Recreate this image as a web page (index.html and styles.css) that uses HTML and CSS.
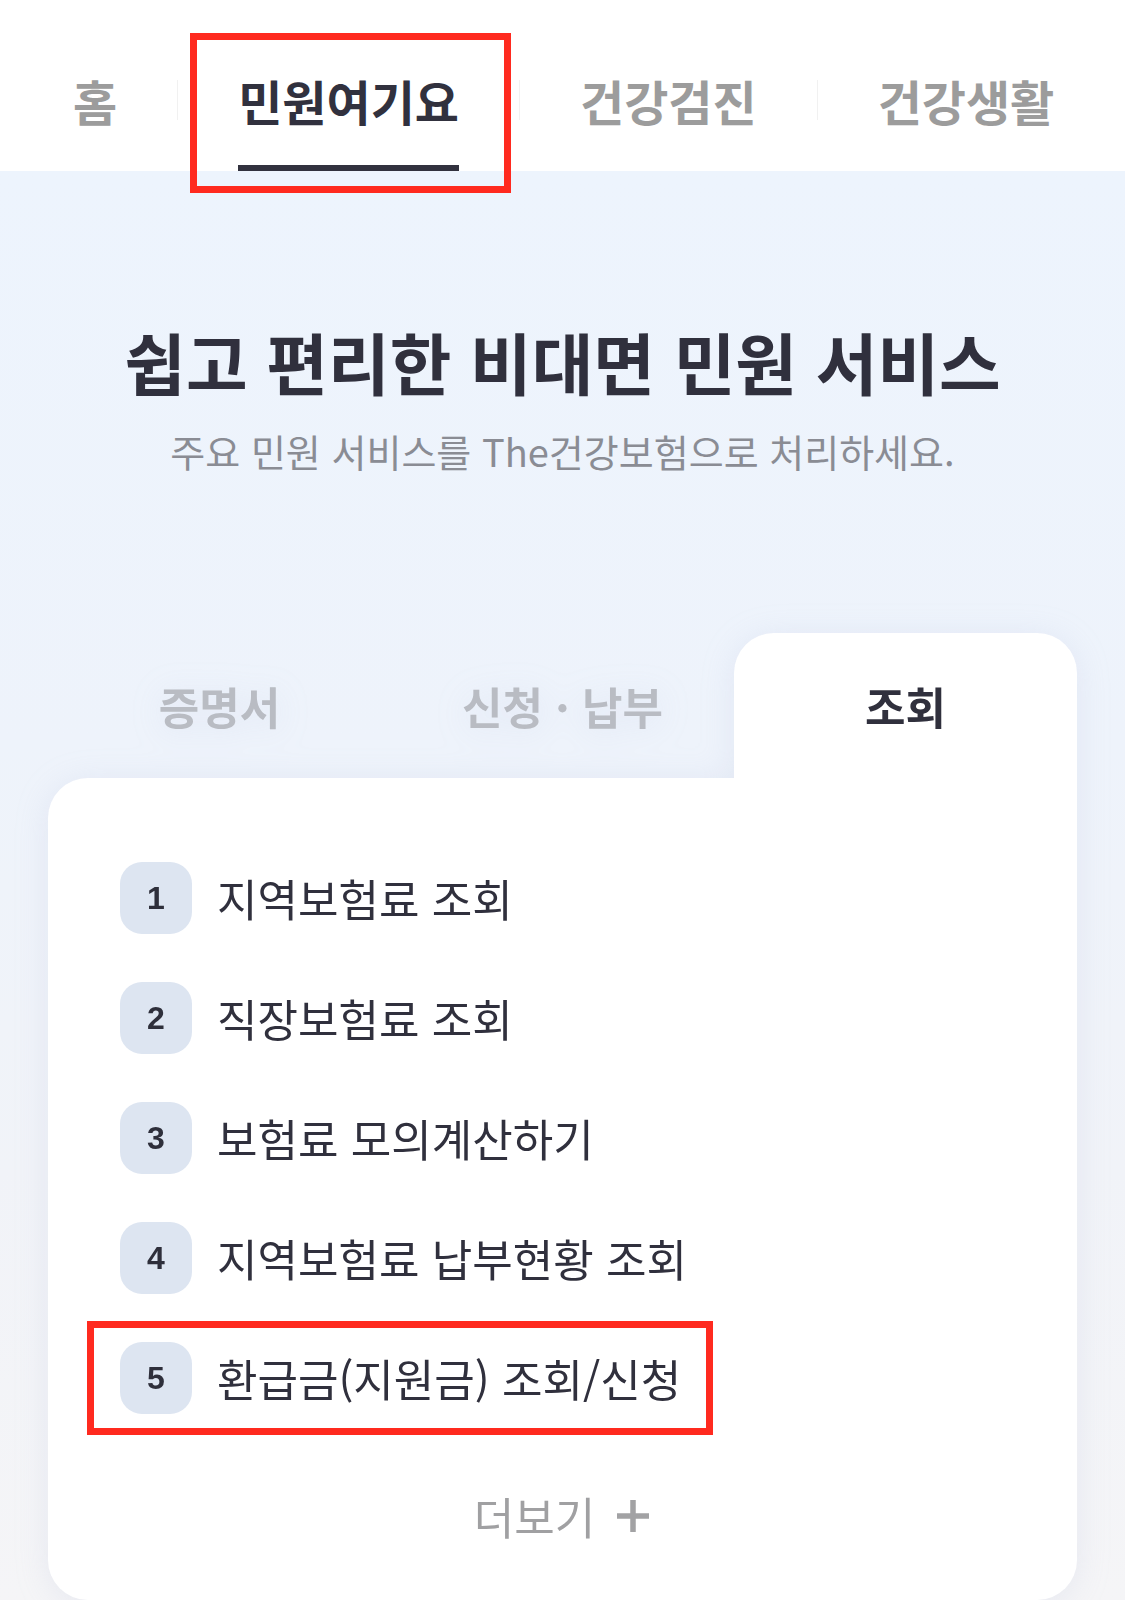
FILE: index.html
```html
<!DOCTYPE html>
<html lang="ko">
<head>
<meta charset="utf-8">
<link rel="stylesheet" href="styles.css">
</head>
<body>
<div class="page">
  <nav class="gnb">
    <a class="gnb-item">홈</a>
    <span class="gnb-sep"></span>
    <a class="gnb-item active">민원여기요<span class="mark mark-tab"></span></a>
    <span class="gnb-sep"></span>
    <a class="gnb-item">건강검진</a>
    <span class="gnb-sep"></span>
    <a class="gnb-item">건강생활</a>
  </nav>
  <main class="content">
    <section class="hero">
      <h1 class="hero-title">쉽고 편리한 비대면 민원 서비스</h1>
      <p class="hero-sub">주요 민원 서비스를 The건강보험으로 처리하세요.</p>
    </section>
    <section class="panel">
      <div class="tabs">
        <div class="tab">증명서</div>
        <div class="tab">신청 · 납부</div>
        <div class="tab on">조회</div>
      </div>
      <div class="panel-body">
        <ol class="list">
          <li class="row"><span class="num">1</span><span class="label">지역보험료 조회</span></li>
          <li class="row"><span class="num">2</span><span class="label">직장보험료 조회</span></li>
          <li class="row"><span class="num">3</span><span class="label">보험료 모의계산하기</span></li>
          <li class="row"><span class="num">4</span><span class="label">지역보험료 납부현황 조회</span></li>
          <li class="row"><span class="num">5</span><span class="label">환급금(지원금) 조회/신청</span><span class="mark mark-row"></span></li>
        </ol>
        <div class="more">더보기 <svg class="plus" viewBox="0 0 36 36" width="36" height="36"><path d="M18 2V34M2 18H34" stroke="#a2a2a4" stroke-width="5.5" fill="none"/></svg></div>
      </div>
    </section>
  </main>
</div>
</body>
</html>
```
FILE: styles.css
```css
* { box-sizing: border-box; margin: 0; padding: 0; }
html, body { width: 1125px; height: 1600px; overflow: hidden; }
body {
  font-family: "Noto Sans CJK KR", "Noto Sans", sans-serif;
  background: #ffffff;
  color: #30303d;
}
.page { width: 1125px; height: 1600px; display: flex; flex-direction: column; }

.gnb {
  height: 171px;
  background: #ffffff;
  display: flex;
  align-items: center;
  padding-left: 13px;
  overflow: visible;
  white-space: nowrap;
}
.gnb-item {
  position: relative;
  flex: none;
  display: flex;
  align-items: center;
  height: 171px;
  padding: 28px 60px 0;
  font-size: 48px;
  font-weight: 700;
  color: #9c9c9c;
  letter-spacing: 0;
  white-space: nowrap;
}
.gnb-item.active { color: #31313e; }
.gnb-item.active::after {
  content: "";
  position: absolute;
  left: 60px;
  right: 60px;
  bottom: 0;
  height: 6px;
  background: #31313e;
}
.gnb-sep { flex: none; width: 1px; height: 40px; margin-top: 28px; background: #f1f1f1; }

.mark { position: absolute; border: 7px solid #ff2a1f; pointer-events: none; }
.mark-tab { left: 12px; top: 33px; width: 321px; height: 160px; }

.content {
  flex: 1;
  background: linear-gradient(180deg, #edf4fd 0%, #eef3fb 40%, #f1f3f8 70%, #f5f5f7 100%);
  display: flex;
  flex-direction: column;
  align-items: center;
}

.hero { text-align: center; padding-top: 150px; }
.hero-title {
  font-size: 67px;
  line-height: 80px;
  font-weight: 700;
  color: #30303d;
  letter-spacing: 0;
}
.hero-sub {
  margin-top: 25px;
  font-size: 38px;
  line-height: 50px;
  font-weight: 400;
  color: #8a8c94;
  letter-spacing: 0;
}

.panel {
  margin-top: 157px;
  width: 1029px;
  flex: 1;
  display: flex;
  flex-direction: column;
  filter: drop-shadow(0 4px 16px rgba(165, 180, 210, 0.18));
}
.tabs { display: grid; grid-template-columns: repeat(3, 1fr); height: 145px; }
.tab {
  display: flex;
  align-items: center;
  justify-content: center;
  font-size: 44px;
  font-weight: 700;
  color: #b9bcc3;
  letter-spacing: 0;
}
.tab.on { background: #ffffff; color: #30303d; border-radius: 40px 40px 0 0; }

.panel-body {
  flex: 1;
  background: #ffffff;
  border-radius: 40px 0 40px 40px;
  padding: 84px 72px 0;
  display: flex;
  flex-direction: column;
}
.list { list-style: none; display: flex; flex-direction: column; gap: 48px; }
.row { position: relative; display: flex; align-items: center; gap: 25px; height: 72px; }
.num {
  width: 72px;
  height: 72px;
  flex: none;
  border-radius: 22px;
  background: #dde5f1;
  display: flex;
  align-items: center;
  justify-content: center;
  font-family: "Liberation Sans", Arial, sans-serif;
  font-weight: 700;
  font-size: 32px;
  color: #2e2f3b;
}
.label { font-size: 44px; font-weight: 400; color: #30303d; letter-spacing: 0; }
.mark-row { left: -33px; top: -21px; width: 626px; height: 114px; }

.more {
  margin-top: 77px;
  display: flex;
  align-items: center;
  justify-content: center;
  gap: 20px;
  height: 50px;
  font-size: 44px;
  color: #a0a0a2;
  letter-spacing: 0;
}
.plus { display: block; }
```
